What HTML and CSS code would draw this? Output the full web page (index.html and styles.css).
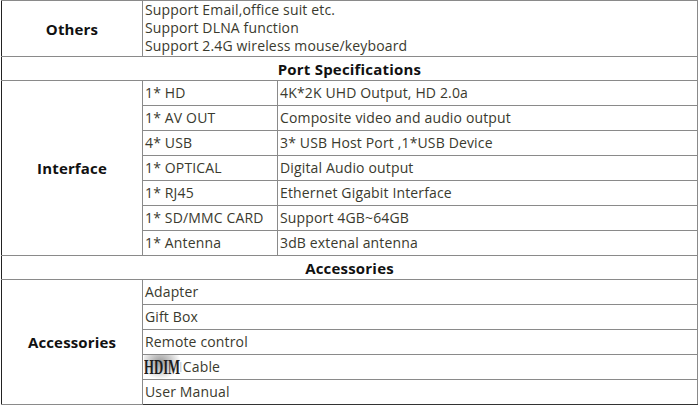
FILE: index.html
```html
<!DOCTYPE html>
<html>
<head>
<meta charset="utf-8">
<link rel="stylesheet" href="styles.css">
</head>
<body>
<table class="spec">
  <colgroup>
    <col class="c1"><col class="c2"><col class="c3">
  </colgroup>
  <tr class="others">
    <td class="label">Others</td>
    <td colspan="2" class="multi">Support Email,office suit etc.<br>Support DLNA function<br>Support 2.4G wireless mouse/keyboard</td>
  </tr>
  <tr class="head"><td colspan="3">Port Specifications</td></tr>
  <tr class="row"><td rowspan="7" class="label">Interface</td><td>1* HD</td><td>4K*2K UHD Output, HD 2.0a</td></tr>
  <tr class="row"><td>1* AV OUT</td><td>Composite video and audio output</td></tr>
  <tr class="row"><td>4* USB</td><td>3* USB Host Port ,1*USB Device</td></tr>
  <tr class="row"><td>1* OPTICAL</td><td>Digital Audio output</td></tr>
  <tr class="row"><td>1* RJ45</td><td>Ethernet Gigabit Interface</td></tr>
  <tr class="row"><td>1* SD/MMC CARD</td><td>Support 4GB~64GB</td></tr>
  <tr class="row"><td>1* Antenna</td><td>3dB extenal antenna</td></tr>
  <tr class="head"><td colspan="3">Accessories</td></tr>
  <tr class="row"><td rowspan="5" class="label">Accessories</td><td colspan="2">Adapter</td></tr>
  <tr class="row"><td colspan="2">Gift Box</td></tr>
  <tr class="row"><td colspan="2">Remote control</td></tr>
  <tr class="row"><td colspan="2"><span class="hdmi-wrap">HDMI<span class="hdmi-img" aria-hidden="true">HDIM</span></span> Cable</td></tr>
  <tr class="row last"><td colspan="2">User Manual</td></tr>
</table>
</body>
</html>
```
FILE: styles.css
```css
html, body {
  margin: 0;
  padding: 0;
  background: #fff;
}
body {
  font-family: "Open Sans", "Liberation Sans", sans-serif;
  font-size: 14px;
  letter-spacing: 0.15px;
  color: #3a3a2e;
}
.spec {
  border-collapse: collapse;
  width: 697px;
  margin-left: 1px;
  table-layout: fixed;
  border-left: 1px solid #222;
  border-bottom: 1px solid #333;
  border-right: 1px solid #555;
  border-top: 1px solid #888;
}
.c1 { width: 141px; }
.c2 { width: 135px; }
.c3 { width: auto; }
.spec td {
  border: 1px solid #8a8a8a;
  padding: 0 2px;
  line-height: 18px;
  vertical-align: middle;
  white-space: nowrap;
}
.spec td:first-child { border-left-color: #222; }
.spec .last td { border-bottom-color: #333; }
.others td { height: 55px; }
.others .multi { vertical-align: top; padding-top: 0; }
.row td { height: 24px; }
.head td {
  height: 23px;
  text-align: center;
  font-weight: 700;
  font-size: 15px;
  letter-spacing: 0.2px;
  color: #111;
}
.spec td.label {
  text-align: center;
  font-weight: 700;
  font-size: 15px;
  color: #111;
  border-left-color: #222;
}
.hdmi-wrap {
  position: relative;
  display: inline-block;
  width: 34px;
  overflow: visible;
  color: #999;
}
.hdmi-img {
  position: absolute;
  left: -1px;
  top: -3px;
  height: 24px;
  width: 63px;
  display: block;
  white-space: nowrap;
  font-family: "Liberation Serif", serif;
  font-size: 22px;
  font-weight: 700;
  line-height: 24px;
  letter-spacing: 0;
  color: #1e1e1e;
  background: radial-gradient(ellipse at 45% 30%, #9a9a9a 0%, #cfcfcf 40%, rgba(255,255,255,0.92) 72%);
  transform: scaleX(0.58);
  transform-origin: left center;
}
```
